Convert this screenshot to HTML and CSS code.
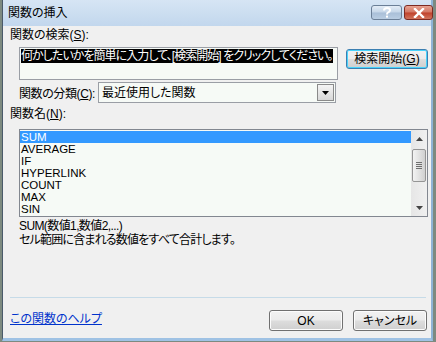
FILE: index.html
```html
<!DOCTYPE html>
<html lang="ja">
<head>
    <meta charset="UTF-8">
    <title>関数の挿入</title>
    <link rel="stylesheet" href="styles.css">
</head>
<body>
    <div class="janela">
        <div class="barra-titulo">
            <span class="titulo">関数の挿入</span>
            <div class="botoes-legenda">
                <span class="legenda ajuda">
                    <svg width="10" height="11" viewBox="0 0 10 11">
                        <path d="M2 3.5 Q2 1 5 1 Q8 1 8 3.3 Q8 4.8 5.8 5.6 Q5 6 5 7.5" fill="none" stroke="#fff" stroke-width="2"/>
                        <rect x="4" y="8.6" width="2" height="2" fill="#fff"/>
                    </svg>
                </span>
                <span class="legenda fechar">
                    <svg width="12" height="10" viewBox="0 0 12 10">
                        <path d="M2 1 L10 9 M10 1 L2 9" stroke="#fff" stroke-width="2.4" stroke-linecap="square"/>
                    </svg>
                </span>
            </div>
        </div>

        <div class="cliente">
            <div class="rotulo">関数の検索(<u>S</u>):</div>

            <div class="linha-busca">
                <div class="caixa-texto">
                    <span class="selecao">何かしたいかを簡単に入力して、[検索開始] をクリックしてください。</span>
                </div>
                <button class="botao botao-foco">検索開始(<u>G</u>)</button>
            </div>

            <div class="linha-categoria">
                <span class="rotulo-categoria">関数の分類(<u>C</u>):</span>
                <div class="combo">
                    <span class="combo-texto">最近使用した関数</span>
                    <span class="combo-seta">
                        <svg width="7" height="4" viewBox="0 0 7 4"><path d="M0 0 H7 L3.5 4 Z" fill="#000"/></svg>
                    </span>
                </div>
            </div>

            <div class="rotulo rotulo-lista">関数名(<u>N</u>):</div>

            <div class="lista">
                <ul class="itens">
                    <li class="ativo">SUM</li>
                    <li>AVERAGE</li>
                    <li>IF</li>
                    <li>HYPERLINK</li>
                    <li>COUNT</li>
                    <li>MAX</li>
                    <li>SIN</li>
                </ul>
                <div class="rolagem">
                    <span class="rolagem-seta">
                        <svg width="7" height="4" viewBox="0 0 7 4"><path d="M3.5 0 L7 4 H0 Z" fill="#444"/></svg>
                    </span>
                    <div class="rolagem-trilho">
                        <div class="polegar">
                            <span></span><span></span><span></span><span></span>
                        </div>
                    </div>
                    <span class="rolagem-seta">
                        <svg width="7" height="4" viewBox="0 0 7 4"><path d="M0 0 H7 L3.5 4 Z" fill="#444"/></svg>
                    </span>
                </div>
            </div>

            <div class="descricao">
                <div class="descricao-sintaxe">SUM(数値1,数値2,...)</div>
                <div class="descricao-texto">セル範囲に含まれる数値をすべて合計します。</div>
            </div>

            <div class="espaco"></div>
            <div class="separador"></div>

            <div class="rodape">
                <a class="ajuda-link" href="#">この関数のヘルプ</a>
                <div class="botoes">
                    <button class="botao botao-dialogo">OK</button>
                    <button class="botao botao-dialogo">キャンセル</button>
                </div>
            </div>
        </div>
    </div>
</body>
</html>
```

FILE: styles.css
```css
body {
    margin: 0;
    width: 436px;
    height: 342px;
    background-color: #7d8a80;
    font-family: "Liberation Sans", "Noto Sans CJK JP", sans-serif;
    font-size: 12px;
    font-feature-settings: "palt";
    color: #000;
    overflow: hidden;
}

.janela {
    display: flex;
    flex-direction: column;
    width: 431px;
    height: 341px;
    margin-left: 2px;
    background: linear-gradient(#c9dcef, #b4cbe4);
    box-sizing: border-box;
    border-left: 1px solid #4a5a6a;
    border-right: 2px solid #8fb3d6;
    border-bottom: 3px solid #9fc2e4;
}

.barra-titulo {
    display: flex;
    align-items: flex-start;
    justify-content: space-between;
    height: 26px;
    flex-shrink: 0;
    background: linear-gradient(#d6e5f4, #c2d7ed);
}

.titulo {
    padding: 5px 0 0 5px;
    font-size: 12px;
    line-height: 16px;
    color: #000;
}

.botoes-legenda {
    display: flex;
    gap: 2px;
    padding-top: 5px;
    margin-right: -2px;
}

.legenda {
    display: flex;
    align-items: center;
    justify-content: center;
    height: 13px;
    border: 1px solid #6b7f97;
    border-radius: 3px;
}

.ajuda {
    width: 29px;
    background: linear-gradient(#e3ecf6 0%, #c5d6e8 48%, #a9bfd8 52%, #b9cde2 100%);
}

.fechar {
    width: 27px;
    border-color: #7d2a22;
    background: linear-gradient(#e8a493 0%, #d27663 48%, #c0412b 52%, #d0735c 100%);
}

.cliente {
    display: flex;
    flex-direction: column;
    flex: 1;
    background-color: #f0f0f0;
    padding: 0 3px 7px 7px;
}

.rotulo {
    margin-top: 2px;
    line-height: 14px;
    height: 14px;
    white-space: nowrap;
}

.linha-busca {
    display: flex;
    align-items: flex-start;
    margin-top: 5px;
    padding-left: 9px;
}

.caixa-texto {
    width: 316px;
    height: 30px;
    border: 1px solid #9a9ea5;
    background-color: #f6faf6;
    padding: 1px 0 0 1px;
    box-sizing: content-box;
    line-height: 14px;
    overflow: hidden;
    white-space: nowrap;
}

.selecao {
    background-color: #000;
    color: #fff;
    letter-spacing: -0.95px;
}

.botao {
    font: inherit;
    font-feature-settings: "palt";
    height: 20px;
    padding: 0;
    line-height: 16px;
    color: #000;
    border: 1px solid #707070;
    border-radius: 3px;
    background: linear-gradient(#f2f2f2 0%, #ebebeb 48%, #dddddd 52%, #cfcfcf 100%);
    box-shadow: inset 0 0 0 1px #fcfcfc;
    white-space: nowrap;
}

.botao-foco {
    width: 82px;
    margin: 2px 0 0 8px;
    border-color: #3c7fb1;
    box-shadow: inset 0 0 0 1px #48d3fb;
}

.linha-categoria {
    display: flex;
    align-items: center;
    margin-top: 2px;
    padding-left: 9px;
}

.rotulo-categoria {
    width: 79px;
    white-space: nowrap;
    letter-spacing: -0.4px;
}

.combo {
    display: flex;
    align-items: center;
    justify-content: space-between;
    width: 236px;
    height: 19px;
    border: 1px solid #9a9ea5;
    background-color: #f6faf6;
}

.combo-texto {
    padding-left: 3px;
    line-height: 14px;
}

.combo-seta {
    display: flex;
    align-items: center;
    justify-content: center;
    width: 15px;
    height: 15px;
    margin-right: 1px;
    border: 1px solid #8a8a8a;
    background: linear-gradient(#f4f4f4, #d8d8d8);
}

.rotulo-lista {
    margin-top: 4px;
}

.lista {
    display: flex;
    margin: 8px 0 0 9px;
    width: 407px;
    height: 86px;
    border: 1px solid #828790;
    background-color: #f6faf6;
}

.itens {
    list-style: none;
    margin: 0;
    padding: 1px 0 0 0;
    flex: 1;
}

.itens li {
    height: 12px;
    line-height: 12px;
    font-size: 11.5px;
    padding-left: 1px;
}

.itens li.ativo {
    background-color: #3399ff;
    color: #fff;
}

.rolagem {
    display: flex;
    flex-direction: column;
    width: 16px;
    background: linear-gradient(to right, #e6e6e6, #f0f0f0);
}

.rolagem-seta {
    display: flex;
    align-items: center;
    justify-content: center;
    height: 17px;
}

.rolagem-trilho {
    flex: 1;
    padding-top: 2px;
}

.polegar {
    display: flex;
    flex-direction: column;
    justify-content: center;
    gap: 1px;
    height: 31px;
    margin: 0 1px;
    border: 1px solid #959595;
    border-radius: 2px;
    background: linear-gradient(to right, #f3f3f3, #e2e2e2 50%, #d0d0d0);
}

.polegar span {
    display: block;
    height: 1px;
    margin: 0 3px;
    background-color: #6f6f6f;
}

.descricao {
    margin: 2px 0 0 9px;
    line-height: 14px;
}

.descricao-sintaxe {
    letter-spacing: -0.6px;
}

.descricao-texto {
    letter-spacing: -0.8px;
}

.espaco {
    flex: 1;
}

.separador {
    height: 1px;
    margin-right: 2px;
    background-color: #c6dbe8;
}

.rodape {
    display: flex;
    align-items: center;
    justify-content: space-between;
    margin-top: 12px;
}

.ajuda-link {
    color: #0033cc;
    text-decoration: underline;
    margin-top: -6px;
}

.botoes {
    display: flex;
    gap: 10px;
    padding-right: 1px;
}

.botao-dialogo {
    width: 74px;
    height: 21px;
}
```
